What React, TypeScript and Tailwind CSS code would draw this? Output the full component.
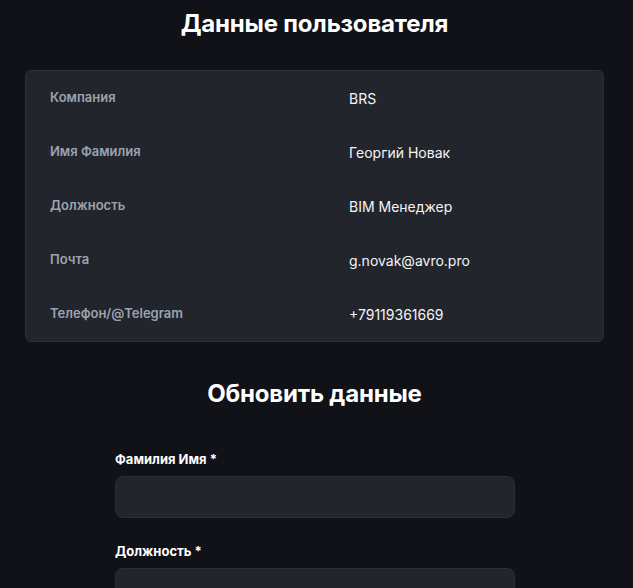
export default function App() {
  const rows = [
    ["Компания", "BRS"],
    ["Имя Фамилия", "Георгий Новак"],
    ["Должность", "BIM Менеджер"],
    ["Почта", "g.novak@avro.pro"],
    ["Телефон/@Telegram", "+79119361669"],
  ];

  return (
    <div
      className="min-h-screen bg-[#111217] text-white pt-2"
      style={{ fontFamily: "Inter, 'Noto Sans', sans-serif" }}
    >
      <div className="w-[629px]">
        <h1 className="text-center text-[24px] leading-8 font-bold tracking-[-0.2px]">Данные пользователя</h1>

        <div className="ml-[25px] mt-[30px] w-[579px] rounded-md border border-[#2c2f37] bg-[#23252d]">
          {rows.map(([label, value]) => (
            <div key={label} className="grid grid-cols-[299px_1fr] h-[54px] items-center">
              <div className="pl-6 text-[13px] font-semibold text-[#9ca3af]">{label}</div>
              <div className="pl-6 text-[14px] text-[#f3f4f6]">{value}</div>
            </div>
          ))}
        </div>

        <h2 className="mt-9 text-center text-[24px] leading-8 font-bold tracking-[-0.2px]">Обновить данные</h2>

        <form className="ml-[115px] mt-[39px] w-[400px] flex flex-col">
          <label className="text-[13px] leading-5 font-bold">Фамилия Имя *</label>
          <input className="mt-[7px] h-[42px] rounded-lg border border-[#2c2f37] bg-[#23252d] outline-none" />
          <label className="mt-[23px] text-[13px] leading-5 font-bold">Должность *</label>
          <input className="mt-[7px] h-[42px] rounded-lg border border-[#2c2f37] bg-[#23252d] outline-none" />
        </form>
      </div>
    </div>
  );
}
